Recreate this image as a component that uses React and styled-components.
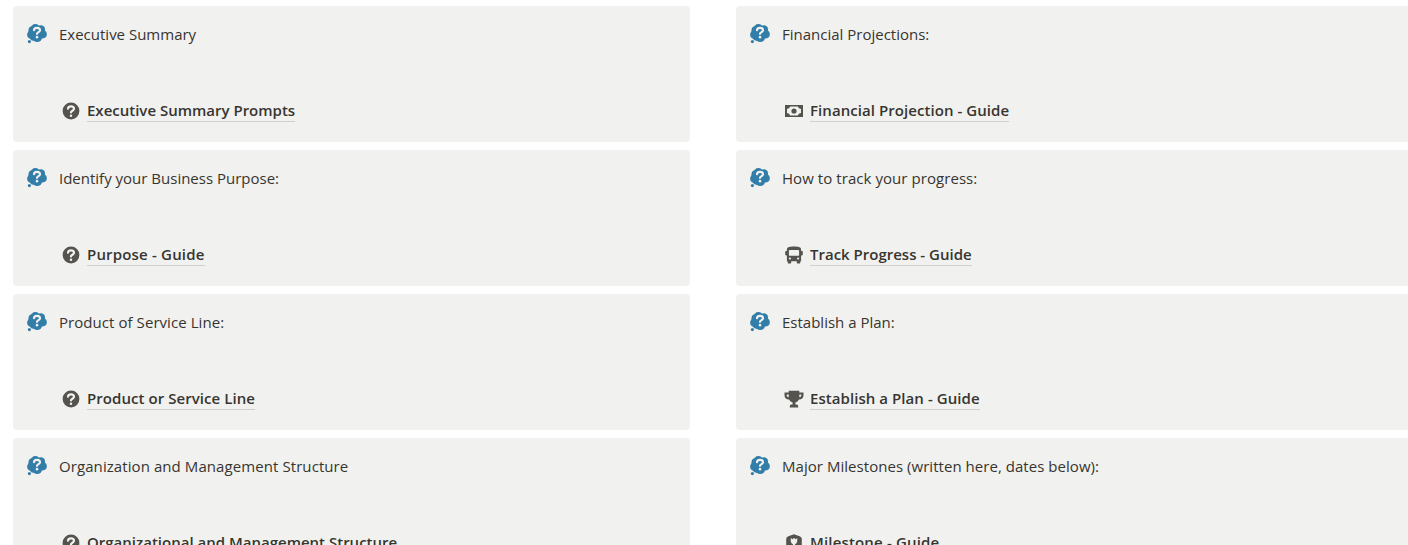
import React from 'react'
import styled, { createGlobalStyle } from 'styled-components';

const GlobalStyle = createGlobalStyle`
    body {
        margin: 0;
        background: white;
        overflow: hidden;
        font-family: "Segoe UI", "Open Sans", "Noto Sans", sans-serif;
        color: #37352f;
    }
`;

const Board = styled.div`
    display: flex;
    gap: 46px;
    height: 545px;
    padding: 6px 0 0 13px;
    box-sizing: border-box;
    overflow: hidden;
`;

const Column = styled.div`
    display: flex;
    flex-direction: column;
    flex: 0 0 677px;
    gap: 8px;
`;

const Callout = styled.div`
    display: flex;
    flex: 0 0 136px;
    box-sizing: border-box;
    padding: 16px 12px 0 12px;
    border-radius: 4px;
    background: #f1f1ef;
`;

const CalloutIcon = styled.svg`
    flex: none;
    width: 24px;
    height: 24px;
    fill: #337ea9;
`;

const CalloutBody = styled.div`
    display: flex;
    flex-direction: column;
    align-items: flex-start;
    gap: 52px;
    margin-left: 10px;
`;

const Title = styled.div`
    height: 24px;
    line-height: 24px;
    font-size: 15px;
    white-space: nowrap;
    letter-spacing: ${props => props.$spacing || 0}px;
`;

const PageLink = styled.a`
    display: flex;
    align-items: center;
    height: 26px;
    gap: 6px;
    margin-left: 2px;
    cursor: pointer;
`;

const LinkIcon = styled.svg`
    flex: none;
    width: 20px;
    height: 20px;
    fill: #55534e;
`;

const LinkText = styled.span`
    height: 21px;
    line-height: 21px;
    font-size: 15px;
    font-weight: 600;
    white-space: nowrap;
    letter-spacing: ${props => props.$spacing || 0}px;
    border-bottom: 1px solid #d1d0cd;
`;

const QuestionMark = (props) => (
    <g fill="none" stroke="#f1f1ef" strokeLinecap="round" strokeLinejoin="round" {...props}>
        <path d="M7 7.7C7.2 6.1 8.4 5.4 10 5.4C11.8 5.4 13 6.3 13 7.8C13 9.8 10.1 9.6 10 11.4" strokeWidth="2.2" />
        <path d="M10 14.7V14.75" strokeWidth="2.5" />
    </g>
)

const ThoughtIcon = () => (
    <CalloutIcon viewBox="0 0 24 24">
        <circle cx="10.4" cy="6.8" r="4.8" />
        <circle cx="15.9" cy="7.4" r="4.2" />
        <circle cx="17.7" cy="12.3" r="4.1" />
        <circle cx="12.2" cy="15.2" r="4.9" />
        <circle cx="6.5" cy="12.7" r="4.4" />
        <circle cx="7.4" cy="8.2" r="3.9" />
        <circle cx="8.6" cy="15" r="3.7" />
        <circle cx="4.4" cy="19.6" r="1.6" />
        <QuestionMark transform="translate(2 .4)" />
    </CalloutIcon>
)

const icons = {
    question: (
        <>
            <circle cx="10" cy="10" r="8.4" />
            <QuestionMark />
        </>
    ),
    money: (
        <path fillRule="evenodd" d="M1 4H19V16H1ZM6.2 5.5Q5.4 7.6 3 8V12Q5.4 12.4 6.2 14.5H13.8Q14.6 12.4 17 12V8Q14.6 7.6 13.8 5.5ZM10 7.4A2.6 2.6 0 1 1 10 12.6A2.6 2.6 0 1 1 10 7.4Z" />
    ),
    bus: (
        <path fillRule="evenodd" d="M2.9 4.4C3 2.3 5 1.5 10 1.5S17 2.3 17.1 4.4V6H18Q18.8 6 18.8 6.8V9.6Q18.8 10.4 18 10.4H17.1V16.2H16.3V17.7Q16.3 18.5 15.5 18.5H13.6Q12.8 18.5 12.8 17.7V16.2H7.2V17.7Q7.2 18.5 6.4 18.5H4.5Q3.7 18.5 3.7 17.7V16.2H2.9V10.4H2Q1.2 10.4 1.2 9.6V6.8Q1.2 6 2 6H2.9ZM5.8 4.9Q4.9 4.9 4.9 5.8V9.9Q4.9 10.8 5.8 10.8H14.2Q15.1 10.8 15.1 9.9V5.8Q15.1 4.9 14.2 4.9ZM5.9 12.4A1.1 1.1 0 1 0 5.9 14.6A1.1 1.1 0 1 0 5.9 12.4ZM14.1 12.4A1.1 1.1 0 1 0 14.1 14.6A1.1 1.1 0 1 0 14.1 12.4Z" />
    ),
    trophy: (
        <path fillRule="evenodd" d="M4.7 1.7H15.3V3.4H19.5V6.2Q19.5 10.2 15 10.6Q13.8 12.9 11.4 13.6V15.4H12.8Q14.2 15.5 14.2 17.2V18.4H5.8V17.2Q5.8 15.5 7.2 15.4H8.6V13.6Q6.2 12.9 5 10.6Q.5 10.2 .5 6.2V3.4H4.7ZM4.7 5.5H2.7V6.4Q2.8 8 4.7 8.3ZM15.3 5.5V8.3Q17.2 8 17.3 6.4V5.5Z" />
    ),
    badge: (
        <path fillRule="evenodd" d="M10 1.3L15.6 3.2Q17.8 4 17.8 6V14Q17.8 16 15.6 16.8L10 18.7L4.4 16.8Q2.2 16 2.2 14V6Q2.2 4 4.4 3.2ZM6.8 5V8.5Q7.2 10.8 9 11.2V15H11V11.2Q12.8 10.8 13.2 8.5V5L11.6 6.2L10 5L8.4 6.2Z" />
    ),
};

const columns = [
    [
        { title: 'Executive Summary', link: 'Executive Summary Prompts', icon: 'question' },
        { title: 'Identify your Business Purpose:', link: 'Purpose - Guide', icon: 'question', linkSpacing: 0.18 },
        { title: 'Product of Service Line:', titleSpacing: 0.06, link: 'Product or Service Line', icon: 'question', linkSpacing: 0.06 },
        { title: 'Organization and Management Structure', titleSpacing: 0.08, link: 'Organizational and Management Structure', icon: 'question' },
    ],
    [
        { title: 'Financial Projections:', link: 'Financial Projection - Guide', icon: 'money', linkSpacing: 0.06 },
        { title: 'How to track your progress:', titleSpacing: 0.06, link: 'Track Progress - Guide', icon: 'bus' },
        { title: 'Establish a Plan:', link: 'Establish a Plan - Guide', icon: 'trophy', linkSpacing: 0.06 },
        { title: 'Major Milestones (written here, dates below):', titleSpacing: 0.04, link: 'Milestone - Guide', icon: 'badge', linkSpacing: 0.16 },
    ],
];

function App() {
    return (
        <>
            <GlobalStyle />
            <Board>
                {columns.map((column, i) => (
                    <Column key={i}>
                        {column.map(item => (
                            <Callout key={item.title}>
                                <ThoughtIcon />
                                <CalloutBody>
                                    <Title $spacing={item.titleSpacing}>{item.title}</Title>
                                    <PageLink>
                                        <LinkIcon viewBox="0 0 20 20">{icons[item.icon]}</LinkIcon>
                                        <LinkText $spacing={item.linkSpacing}>{item.link}</LinkText>
                                    </PageLink>
                                </CalloutBody>
                            </Callout>
                        ))}
                    </Column>
                ))}
            </Board>
        </>
    )
}

export default App
